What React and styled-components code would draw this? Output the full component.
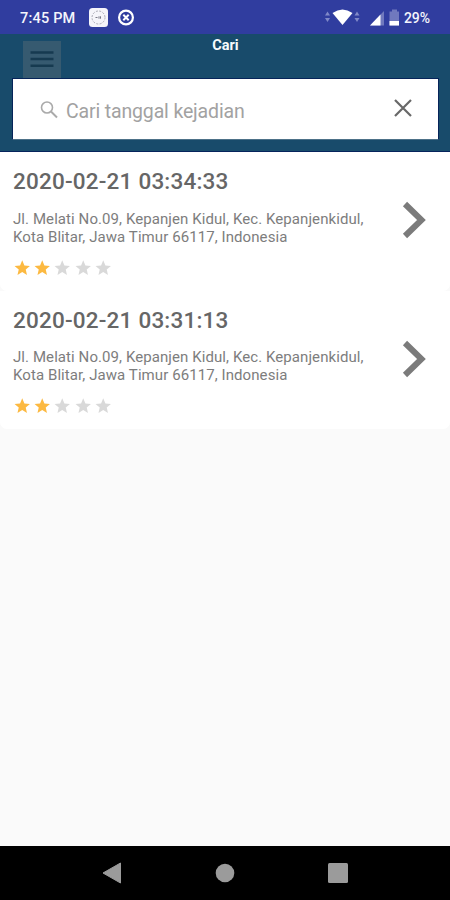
import styled, { createGlobalStyle } from "styled-components";
import { useState } from "react";

const GlobalStyle = createGlobalStyle`
  * {
    box-sizing: border-box;
  }
  body {
    margin: 0;
    font-family: Roboto, "Liberation Sans", sans-serif;
  }
`;

const Screen = styled.div`
  display: flex;
  flex-direction: column;
  width: 450px;
  height: 900px;
  overflow: hidden;
  background: #fafafa;
`;

const StatusBar = styled.div`
  display: flex;
  align-items: center;
  justify-content: space-between;
  flex: none;
  height: 34px;
  padding: 1px 19px 0 20px;
  background: #303d9f;
  color: #f4f5fc;
`;

const StatusGroup = styled.div`
  display: flex;
  align-items: center;

  svg {
    display: block;
  }
`;

const Clock = styled.span`
  width: 68px;
  padding-top: 1px;
  font-size: 14.5px;
  font-weight: 500;
  letter-spacing: 0.2px;
  white-space: nowrap;
`;

const Battery = styled.span`
  width: 27px;
  margin-left: 4px;
  padding-top: 1px;
  font-size: 14px;
  font-weight: 500;
  letter-spacing: -0.1px;
`;

const Header = styled.div`
  flex: none;
  height: 118px;
  padding: 0 11px 0 12px;
  background: #184b6b;
  border-bottom: 1px solid #06245c;
`;

const HeaderTop = styled.div`
  display: grid;
  grid-template-columns: 1fr auto 1fr;
  align-items: start;
  height: 44px;
  padding: 0 11px;
`;

const MenuButton = styled.button`
  display: flex;
  align-items: center;
  justify-content: center;
  width: 38px;
  height: 37px;
  margin-top: 7px;
  padding: 0 1px 2px 0;
  border: 0;
  background: #365a70;
`;

const HeaderTitle = styled.div`
  padding-top: 3px;
  font-size: 14.5px;
  font-weight: 700;
  line-height: 17px;
  color: #f7fafc;
`;

const SearchBox = styled.label`
  display: flex;
  align-items: center;
  height: 62px;
  padding: 0 25px 0 27px;
  border: 1px solid #062459;
  border-bottom-color: #4d7188;
  background: #fff;
`;

const SearchInput = styled.input`
  flex: 1;
  min-width: 0;
  margin-left: 7px;
  padding: 4px 0 0;
  border: 0;
  outline: 0;
  background: none;
  font-family: inherit;
  font-size: 19.5px;
  letter-spacing: -0.15px;
  color: #555;

  &::placeholder {
    color: #a2a2a2;
    opacity: 1;
  }
`;

const ClearButton = styled.button`
  display: flex;
  margin-top: -2px;
  padding: 0;
  border: 0;
  background: none;
`;

const List = styled.div`
  flex: 1;
`;

const Card = styled.div`
  display: flex;
  align-items: center;
  justify-content: space-between;
  height: 138.5px;
  padding: 0 24px 0 13px;
  border-radius: 0 0 7px 7px;
  background: #fff;
`;

const CardBody = styled.div`
  height: 100%;
  padding-top: 15px;
`;

const CardTitle = styled.div`
  font-size: 22.5px;
  font-weight: 500;
  line-height: 29px;
  letter-spacing: 0.2px;
  white-space: nowrap;
  color: #666;
`;

const Address = styled.div`
  margin-top: 13.5px;
  font-size: 15px;
  line-height: 18px;
  letter-spacing: 0.08px;
  white-space: pre-line;
  color: #7d7d7d;
`;

const Rating = styled.div`
  display: flex;
  gap: 0.2px;
  margin-top: 12px;
`;

const Chevron = styled.svg`
  margin-bottom: 2px;
`;

const NavBar = styled.div`
  display: flex;
  align-items: center;
  justify-content: space-between;
  flex: none;
  height: 54px;
  padding: 0 102px;
  background: #000;
`;

const reports = [
  {
    date: "2020-02-21 03:34:33",
    address:
      "Jl. Melati No.09, Kepanjen Kidul, Kec. Kepanjenkidul,\nKota Blitar, Jawa Timur 66117, Indonesia",
    rating: 2,
  },
  {
    date: "2020-02-21 03:31:13",
    address:
      "Jl. Melati No.09, Kepanjen Kidul, Kec. Kepanjenkidul,\nKota Blitar, Jawa Timur 66117, Indonesia",
    rating: 2,
  },
];

let Star = ({ filled }) => (
  <svg width="20" height="20" viewBox="0 0 26 26">
    <path
      fill={filled ? "#fcb941" : "#d9d9d9"}
      d="M12 18.270L18.180 22l-1.640-7.030L22 10.240l-7.190-.61L12 3 9.190 9.630 2 10.240l5.460 4.730L5.820 22z"
    />
  </svg>
);

let Report = ({ report }) => (
  <Card>
    <CardBody>
      <CardTitle>{report.date}</CardTitle>
      <Address>{report.address}</Address>
      <Rating>
        {[1, 2, 3, 4, 5].map((n) => (
          <Star key={n} filled={n <= report.rating} />
        ))}
      </Rating>
    </CardBody>
    <Chevron width="24" height="38" viewBox="0 0 24 38">
      <path d="M3 3l16.500 16L3 35" fill="none" stroke="#7b7b7b" strokeWidth="6" />
    </Chevron>
  </Card>
);

let App = () => {
  const [query, setquery] = useState("");

  return (
    <Screen>
      <GlobalStyle />
      <StatusBar>
        <StatusGroup>
          <Clock>7:45 PM</Clock>
          <svg width="48" height="22" viewBox="0 0 48 22">
            <rect x="1" y="1" width="19" height="19" rx="3.500" fill="#f5f5fa" />
            <circle
              cx="10.500"
              cy="10.500"
              r="6.500"
              fill="none"
              stroke="#aaaab4"
              strokeWidth="1"
              strokeDasharray="2 1.400"
            />
            <path d="M7.500 10.500h2M11 9.300v2.400M12.500 9.300v2.400" stroke="#777784" strokeWidth="1" />
            <circle cx="38" cy="10.500" r="6.900" fill="none" stroke="#fff" strokeWidth="2.200" />
            <path d="M35.300 7.800l5.400 5.400M40.700 7.800l-5.400 5.400" stroke="#fff" strokeWidth="2" />
          </svg>
        </StatusGroup>
        <StatusGroup>
          <svg width="75" height="20" viewBox="0 0 75 20">
            <path d="M0 7.500l2.500-4L5 7.500zM0 10l2.500 4 2.500-4z" fill="#8089c8" />
            <path d="M29.500 7.500L32 3.500l2.500 4zM29.500 10l2.500 4 2.500-4z" fill="#8089c8" />
            <path d="M7.500 5Q17.500-2 27.500 5L17.500 17z" fill="#fff" />
            <path d="M45 17.500L59 3v14.500z" fill="#7079be" />
            <path d="M45 17.500L55.500 6.600v10.900z" fill="#fff" />
            <path d="M64.500 3.500h2.500V1.500h5v2h2v14h-9.500z" fill="#7079be" />
            <path d="M64.500 13h9.500v4.500h-9.500z" fill="#fff" />
          </svg>
          <Battery>29%</Battery>
        </StatusGroup>
      </StatusBar>
      <Header>
        <HeaderTop>
          <MenuButton aria-label="Menu">
            <svg width="24" height="20" viewBox="0 0 24 20">
              <path d="M0.500 3.500h23M0.500 10h23M0.500 16.800h23" stroke="#163a50" strokeWidth="2.400" />
            </svg>
          </MenuButton>
          <HeaderTitle>Cari</HeaderTitle>
        </HeaderTop>
        <SearchBox>
          <svg width="19" height="19" viewBox="0 0 19 19">
            <circle cx="7" cy="7.500" r="5.500" fill="none" stroke="#aaa" strokeWidth="1.600" />
            <path d="M11 11.500l6 6" stroke="#aaa" strokeWidth="2" />
          </svg>
          <SearchInput
            type="text"
            placeholder="Cari tanggal kejadian"
            value={query}
            onChange={(e) => setquery(e.target.value)}
          />
          <ClearButton type="button" aria-label="Clear" onClick={() => setquery("")}>
            <svg width="20" height="20" viewBox="0 0 20 20">
              <path d="M2 2l16 16M18 2L2 18" stroke="#686868" strokeWidth="2.200" />
            </svg>
          </ClearButton>
        </SearchBox>
      </Header>
      <List>
        {reports
          .filter((report) => report.date.includes(query))
          .map((report) => (
            <Report key={report.date} report={report} />
          ))}
      </List>
      <NavBar>
        <svg width="20" height="22" viewBox="0 0 20 22">
          <path d="M1 11L18.500 1v20z" fill="#9b9b9b" stroke="#9b9b9b" strokeLinejoin="round" />
        </svg>
        <svg width="20" height="20" viewBox="0 0 20 20">
          <circle cx="10" cy="10" r="9.300" fill="#9b9b9b" />
        </svg>
        <svg width="20" height="20" viewBox="0 0 20 20">
          <rect width="20" height="20" rx="1.500" fill="#9b9b9b" />
        </svg>
      </NavBar>
    </Screen>
  );
};

export default App;
